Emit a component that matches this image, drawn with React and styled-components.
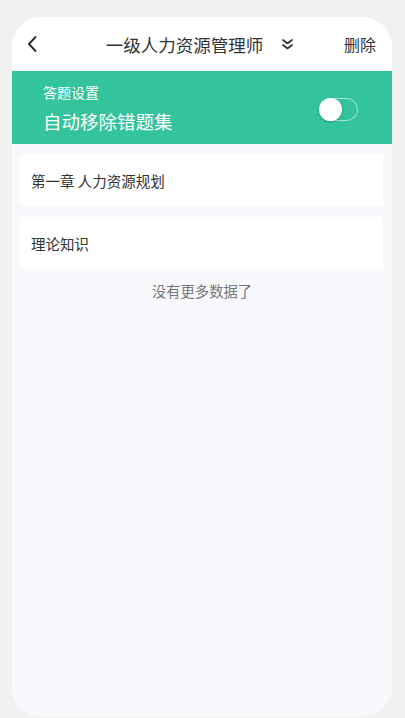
import React from 'react'
import styled, { createGlobalStyle } from 'styled-components'

const Global = createGlobalStyle`
  html, body {
    margin: 0;
    padding: 0;
    background: #f1f1f1;
    font-family: "Noto Sans CJK SC", "Noto Sans", sans-serif;
  }
`
const Screen = styled.div`
  padding: 17px 13px 0 12px;
  height: 718px;
  box-sizing: border-box;
  overflow: hidden;
`
const Phone = styled.div`
  width: 380px;
  height: 700px;
  border-radius: 30px;
  overflow: hidden;
  background: #f8f9fd;
  display: flex;
  flex-direction: column;
`
const Header = styled.div`
  height: 54px;
  background: #fff;
  display: flex;
  align-items: center;
`
const Side = styled.div`
  width: 60px;
  display: flex;
  justify-content: ${p => (p.$right ? 'flex-end' : 'flex-start')};
  padding: ${p => (p.$right ? '0 16px 0 0' : '0 0 0 14px')};
  box-sizing: border-box;
  color: #333;
  font-size: 16px;
`
const Center = styled.div`
  flex: 1;
  display: flex;
  justify-content: center;
  align-items: center;
  gap: 18px;
  padding-right: 4px;
`
const Title = styled.div`
  font-size: 17.5px;
  color: #333;
`
const Banner = styled.div`
  height: 73px;
  background: #34c49d;
  display: flex;
  align-items: center;
  justify-content: space-between;
  padding: 0 34px 0 31px;
  box-sizing: border-box;
`
const Label = styled.div`
  color: #fff;
  font-size: 14px;
  line-height: 20px;
`
const Setting = styled.div`
  color: #fff;
  font-size: 18.5px;
  line-height: 26px;
  margin-top: 6px;
`
const Track = styled.div`
  width: 39px;
  height: 23px;
  border-radius: 12px;
  border: 1px solid rgba(255, 255, 255, 0.55);
  box-sizing: border-box;
  position: relative;
  margin-top: 4px;
`
const Knob = styled.div`
  position: absolute;
  left: -1px;
  top: -1px;
  width: 23px;
  height: 23px;
  border-radius: 50%;
  background: #fff;
  box-shadow: 0 1px 3px rgba(0, 0, 0, 0.25);
`
const List = styled.div`
  padding: 10px 9px 0 8px;
  display: flex;
  flex-direction: column;
  gap: 11px;
`
const Item = styled.div`
  height: 52px;
  background: #fff;
  display: flex;
  align-items: center;
  padding-left: 11px;
  font-size: 14.5px;
  color: #333;
`
const NoMore = styled.div`
  text-align: center;
  font-size: 14.3px;
  color: #777;
  margin-top: 11px;
`

function BackIcon() {
  return (
    <svg width="12" height="18" viewBox="0 0 12 18">
      <path d="M9.5 2 L3 9 L9.5 16" fill="none" stroke="#333" strokeWidth="2" strokeLinecap="round" strokeLinejoin="round" />
    </svg>
  )
}

function ChevronsDown() {
  return (
    <svg width="13" height="13" viewBox="0 0 13 13">
      <path d="M2 2 L6.5 5.5 L11 2 M2 7 L6.5 10.5 L11 7" fill="none" stroke="#333" strokeWidth="1.7" strokeLinecap="round" strokeLinejoin="round" />
    </svg>
  )
}

export default function App() {
  return (
    <Screen>
      <Global />
      <Phone>
        <Header>
          <Side>
            <BackIcon />
          </Side>
          <Center>
            <Title>一级人力资源管理师</Title>
            <ChevronsDown />
          </Center>
          <Side $right>删除</Side>
        </Header>
        <Banner>
          <div>
            <Label>答题设置</Label>
            <Setting>自动移除错题集</Setting>
          </div>
          <Track>
            <Knob />
          </Track>
        </Banner>
        <List>
          <Item>第一章 人力资源规划</Item>
          <Item>理论知识</Item>
        </List>
        <NoMore>没有更多数据了</NoMore>
      </Phone>
    </Screen>
  )
}
